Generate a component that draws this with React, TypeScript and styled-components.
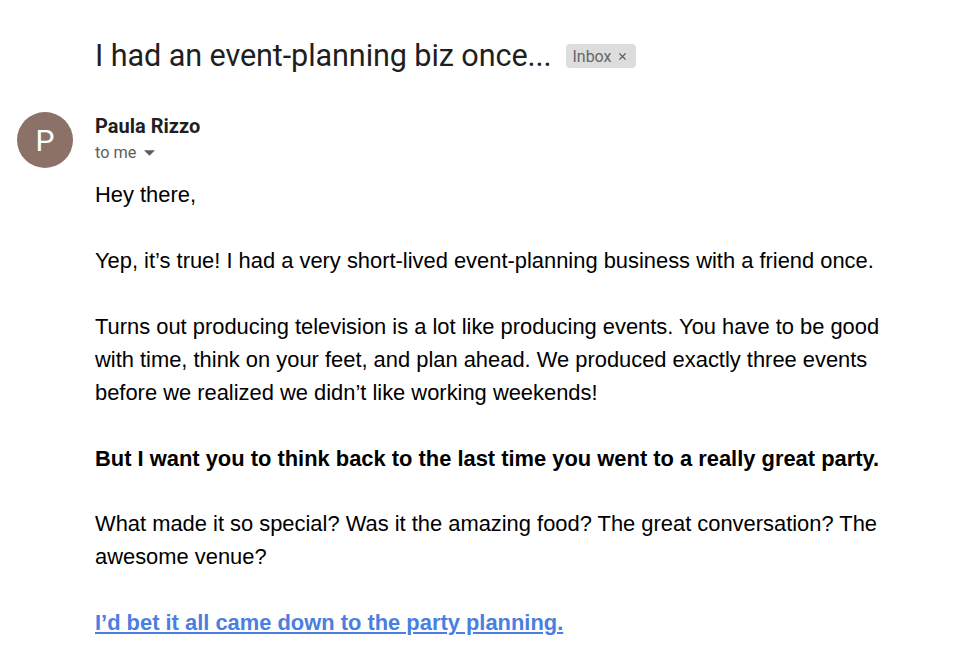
import React from "react";
import styled, { createGlobalStyle } from "styled-components";

const Global = createGlobalStyle`
  html, body { margin: 0; padding: 0; background: #fff; }
  body { font-family: "Liberation Sans", Arial, sans-serif; }
`;

const Page = styled.div`
  display: flex;
  flex-direction: column;
  padding: 29px 0 0 17px;
  width: 956px;
  box-sizing: border-box;
`;

const SubjectRow = styled.div`
  display: flex;
  align-items: center;
  gap: 15px;
  padding-left: 78px;
  height: 52px;
`;

const Subject = styled.h1`
  margin: 0;
  font-family: Roboto, "Open Sans", sans-serif;
  font-weight: 400;
  font-size: 30.6px;
  color: #1f1f1f;
  letter-spacing: -0.1px;
`;

const Chip = styled.span`
  display: inline-flex;
  align-items: center;
  gap: 6px;
  height: 24px;
  padding: 0 9px 0 6px;
  border-radius: 4px;
  background: #dddddd;
  color: #666;
  font-family: Roboto, sans-serif;
  font-size: 16px;
  margin-top: 2px;
`;

const Message = styled.div`
  display: flex;
  gap: 22px;
  margin-top: 31px;
`;

const Avatar = styled.div`
  width: 56px;
  height: 56px;
  border-radius: 50%;
  background: #8c7168;
  color: #fff;
  display: flex;
  align-items: center;
  justify-content: center;
  font-family: Roboto, sans-serif;
  font-size: 30px;
  flex-shrink: 0;
`;

const Content = styled.div`
  display: flex;
  flex-direction: column;
`;

const Sender = styled.div`
  font-family: Roboto, sans-serif;
  font-weight: 700;
  font-size: 20px;
  color: #1f1f1f;
  line-height: 26px;
  margin-top: 1px;
`;

const ToMe = styled.div`
  display: flex;
  align-items: center;
  gap: 8px;
  font-family: Roboto, sans-serif;
  font-size: 16.3px;
  color: #5e5e5e;
  line-height: 22px;
  margin-top: 3px;
`;

const Body = styled.div`
  margin-top: 15px;
  font-size: 21.9px;
  line-height: 32.95px;
  color: #000;
  width: 800px;
`;

const P = styled.p`
  margin: 0 0 32.95px 0;
`;

const Link = styled.a`
  color: #4a7ee0;
  font-weight: 700;
  text-decoration: underline;
`;

export default function App() {
  return (
    <>
      <Global />
      <Page>
        <SubjectRow>
          <Subject>I had an event-planning biz once...</Subject>
          <Chip>
            Inbox
            <svg width="9" height="9" viewBox="0 0 10 10">
              <path d="M1.5 1.5 L8.5 8.5 M8.5 1.5 L1.5 8.5" stroke="#555" strokeWidth="1.4" />
            </svg>
          </Chip>
        </SubjectRow>
        <Message>
          <Avatar>P</Avatar>
          <Content>
            <Sender>Paula Rizzo</Sender>
            <ToMe>
              to me
              <svg width="11" height="6" viewBox="0 0 10 5">
                <path d="M0 0 L10 0 L5 5 Z" fill="#5e5e5e" />
              </svg>
            </ToMe>
            <Body>
              <P>Hey there,</P>
              <P>Yep, it’s true! I had a very short-lived event-planning business with a friend once.</P>
              <P>
                Turns out producing television is a lot like producing events. You have to be good with time, think on your
                feet, and plan ahead. We produced exactly three events before we realized we didn’t like working weekends!
              </P>
              <P>
                <strong>But I want you to think back to the last time you went to a really great party.</strong>
              </P>
              <P>
                What made it so special? Was it the amazing food? The great conversation? The awesome venue?
              </P>
              <P>
                <Link href="#">I’d bet it all came down to the party planning.</Link>
              </P>
            </Body>
          </Content>
        </Message>
      </Page>
    </>
  );
}
